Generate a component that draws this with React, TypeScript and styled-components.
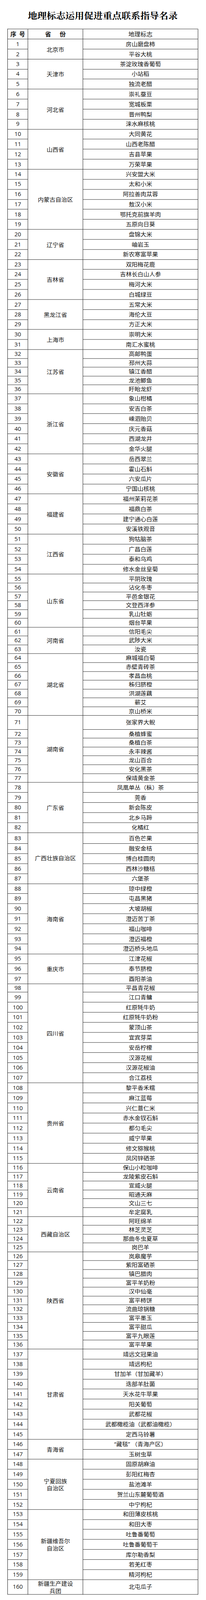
import React, { useEffect, useState } from 'react';
import styled, { createGlobalStyle } from 'styled-components';

const GlobalStyle = createGlobalStyle`
  html, body { margin: 0; padding: 0; background: #ffffff; }
  body {
    font-family: "Open Sans", "Noto Sans CJK SC", sans-serif;
    color: #111111;
  }
`;

type Group = { province: string[]; items: string[] };

const groups: Group[] = [
  { province: ['北京市'], items: ['房山磨盘柿', '平谷大桃'] },
  { province: ['天津市'], items: ['茶淀玫瑰香葡萄', '小站稻', '独流老醋'] },
  { province: ['河北省'], items: ['崇礼蚕豆', '宽城板栗', '晋州鸭梨', '涞水麻核桃'] },
  { province: ['山西省'], items: ['大同黄花', '山西老陈醋', '吉县苹果', '万荣苹果'] },
  { province: ['内蒙古自治区'], items: ['兴安盟大米', '太和小米', '阿拉善肉苁蓉', '敖汉小米', '鄂托克前旗羊肉', '五原向日葵'] },
  { province: ['辽宁省'], items: ['盘锦大米', '岫岩玉', '新农寒富苹果'] },
  { province: ['吉林省'], items: ['双阳梅花鹿', '吉林长白山人参', '梅河大米', '白城绿豆'] },
  { province: ['黑龙江省'], items: ['五常大米', '海伦大豆', '方正大米'] },
  { province: ['上海市'], items: ['崇明大米', '南汇水蜜桃'] },
  { province: ['江苏省'], items: ['高邮鸭蛋', '邳州大蒜', '镇江香醋', '龙池鲫鱼', '盱眙龙虾'] },
  { province: ['浙江省'], items: ['象山柑橘', '安吉白茶', '嵊泗贻贝', '庆元香菇', '西湖龙井', '金华火腿'] },
  { province: ['安徽省'], items: ['岳西翠兰', '霍山石斛', '六安瓜片', '宁国山核桃'] },
  { province: ['福建省'], items: ['福州茉莉花茶', '福鼎白茶', '建宁通心白莲', '安溪铁观音'] },
  { province: ['江西省'], items: ['狗牯脑茶', '广昌白莲', '泰和乌鸡', '修水金丝皇菊'] },
  { province: ['山东省'], items: ['平阴玫瑰', '沾化冬枣', '平邑金银花', '文登西洋参', '乳山牡蛎', '烟台苹果'] },
  { province: ['河南省'], items: ['信阳毛尖', '武陟大米', '汝瓷'] },
  { province: ['湖北省'], items: ['麻城福白菊', '赤壁青砖茶', '孝昌血桃', '秭归脐橙', '洪湖莲藕', '蕲艾', '京山桥米'] },
  { province: ['湖南省'], items: ['张家界大鲵', '桑植蜂蜜', '桑植白茶', '永丰辣酱', '龙山百合', '安化黑茶', '保靖黄金茶'] },
  { province: ['广东省'], items: ['凤凰单丛（枞）茶', '莞香', '新会陈皮', '北乡马蹄', '化橘红'] },
  { province: ['广西壮族自治区'], items: ['百色芒果', '融安金桔', '博白桂圆肉', '西林沙糖桔', '六堡茶'] },
  { province: ['海南省'], items: ['琼中绿橙', '屯昌黑猪', '大坡胡椒', '澄迈苦丁茶', '福山咖啡', '澄迈福橙', '澄迈桥头地瓜'] },
  { province: ['重庆市'], items: ['江津花椒', '奉节脐橙', '酉阳茶油'] },
  { province: ['四川省'], items: ['平昌青花椒', '江口青鳙', '红原牦牛奶', '红原牦牛奶粉', '蒙顶山茶', '宜宾芽菜', '安岳柠檬', '汉源花椒', '汉源花椒油', '合江荔枝'] },
  { province: ['贵州省'], items: ['黎平香禾糯', '麻江蓝莓', '兴仁薏仁米', '赤水金钗石斛', '都匀毛尖', '威宁苹果', '修文猕猴桃', '凤冈锌硒茶'] },
  { province: ['云南省'], items: ['保山小粒咖啡', '龙陵紫皮石斛', '宣威火腿', '昭通天麻', '文山三七', '牟定腐乳'] },
  { province: ['西藏自治区'], items: ['阿旺绵羊', '林芝灵芝', '那曲冬虫夏草', '岗巴羊'] },
  { province: ['陕西省'], items: ['岚皋魔芋', '紫阳富硒茶', '镇巴腊肉', '富平羊奶粉', '汉中仙毫', '富平柿饼', '流曲琼锅糖', '富平墨玉', '富平甜瓜', '富平九眼莲', '富平苹果'] },
  { province: ['甘肃省'], items: ['靖远文冠果油', '靖远枸杞', '甘加羊（甘加藏羊）', '迭部羊肚菌', '天水花牛苹果', '阳关葡萄', '武都花椒', '武都橄榄油（武都油橄榄）', '定西马铃薯'] },
  { province: ['青海省'], items: ['“藏毯” （青海产区）', '玉树虫草'] },
  { province: ['宁夏回族', '自治区'], items: ['固原胡麻油', '彭阳红梅杏', '盐池滩羊', '贺兰山东麓葡萄酒', '中宁枸杞'] },
  { province: ['新疆维吾尔', '自治区'], items: ['和田薄皮核桃', '和田大枣', '吐鲁番葡萄', '吐鲁番葡萄干', '库尔勒香梨', '若羌红枣', '精河枸杞'] },
  { province: ['新疆生产建设', '兵团'], items: ['北屯瓜子'] },
];

// measured row heights (px) of the scanned table, by serial number
const rowHeight = (n: number): number => {
  if (n <= 31) return 27.85;
  if (n <= 36) return 24.52;
  if (n <= 54) return 27.89;
  if (n <= 70) return 24.56;
  if (n === 71) return 38.4;
  if (n <= 77) return 24.6;
  if (n <= 82) return 27.88;
  if (n === 83) return 30.6;
  if (n <= 97) return 27.86;
  if (n === 98) return 22.7;
  if (n === 99) return 28.3;
  if (n <= 115) return 28;
  if (n <= 136) return 24.57;
  if (n <= 159) return 27.87;
  return 41;
};

const DOC_H = 4447;
const LINE = '#1c1c1c';

// the whole sheet is meant to be seen at once: when the window is shorter
// than the sheet, it is fitted to the window height
const fitScale = (): number =>
  typeof window === 'undefined' || !window.innerHeight ? 1 : Math.min(1, window.innerHeight / DOC_H);

const Frame = styled.div`
  width: 528px;
  overflow: hidden;
  background: #ffffff;
`;

const Page = styled.main`
  width: 528px;
  height: ${DOC_H}px;
  box-sizing: border-box;
  padding: 30px 20px 0 19px;
  transform-origin: 0 0;
`;

const Title = styled.h1`
  margin: 0 0 26px;
  height: 24px;
  line-height: 24px;
  font-size: 24px;
  font-weight: 700;
  text-align: center;
  color: #000000;
  font-family: "Noto Serif CJK SC", "Noto Sans CJK SC", serif;
`;

const Table = styled.div<{ $rows: string }>`
  display: grid;
  grid-template-columns: 52px 141px 295px;
  grid-template-rows: ${(p) => p.$rows};
  width: 489px;
  box-sizing: border-box;
  border-top: 1px solid ${LINE};
  border-left: 1px solid ${LINE};
`;

const CellBase = styled.div`
  box-sizing: border-box;
  min-height: 0;
  display: flex;
  align-items: center;
  justify-content: center;
  text-align: center;
  border-right: 1px solid ${LINE};
  border-bottom: 1px solid ${LINE};
  font-size: 15px;
  line-height: 19.5px;
  white-space: nowrap;
`;

const HeadCell = styled(CellBase)<{ $col: number; $gap: number; $bold?: boolean }>`
  grid-column: ${(p) => p.$col};
  gap: ${(p) => p.$gap}px;
  font-family: "Noto Sans CJK SC", sans-serif;
  font-weight: ${(p) => (p.$bold ? 700 : 400)};
  font-size: 15.5px;
`;

const NumCell = styled(CellBase)`
  grid-column: 1;
  font-family: "Open Sans", "Noto Sans CJK SC", sans-serif;
`;

const ProvinceCell = styled(CellBase)<{ $span: number }>`
  grid-column: 2;
  grid-row: span ${(p) => p.$span};
  flex-direction: column;
  font-family: "Noto Sans CJK SC", sans-serif;
`;

const NameCell = styled(CellBase)`
  grid-column: 3;
  font-family: "Open Sans", "Noto Sans CJK SC", sans-serif;
`;

const Line = styled.span`
  display: block;
`;

export default function App() {
  const [scale, setScale] = useState<number>(fitScale);

  useEffect(() => {
    const onResize = () => setScale(fitScale());
    onResize();
    window.addEventListener('resize', onResize);
    return () => window.removeEventListener('resize', onResize);
  }, []);

  let n = 0;
  const rows: number[] = [28];
  const cells: React.ReactNode[] = [];

  groups.forEach((g, gi) => {
    g.items.forEach((item, ii) => {
      n += 1;
      rows.push(rowHeight(n));
      cells.push(<NumCell key={`n${n}`}>{n}</NumCell>);
      if (ii === 0) {
        cells.push(
          <ProvinceCell key={`p${gi}`} $span={g.items.length}>
            {g.province.map((l) => (
              <Line key={l}>{l}</Line>
            ))}
          </ProvinceCell>
        );
      }
      cells.push(<NameCell key={`i${n}`}>{item}</NameCell>);
    });
  });

  const template = rows.map((h) => `${h}px`).join(' ');

  return (
    <>
      <GlobalStyle />
      <Frame style={{ height: `${Math.floor(DOC_H * scale)}px` }}>
        <Page style={scale < 1 ? { transform: `scaleY(${scale})` } : undefined}>
          <Title>地理标志运用促进重点联系指导名录</Title>
          <Table $rows={template}>
            <HeadCell $col={1} $gap={7} $bold>
              <span>序</span>
              <span>号</span>
            </HeadCell>
            <HeadCell $col={2} $gap={22} $bold>
              <span>省</span>
              <span>份</span>
            </HeadCell>
            <HeadCell $col={3} $gap={0}>
              <span>地理标志</span>
            </HeadCell>
            {cells}
          </Table>
        </Page>
      </Frame>
    </>
  );
}
